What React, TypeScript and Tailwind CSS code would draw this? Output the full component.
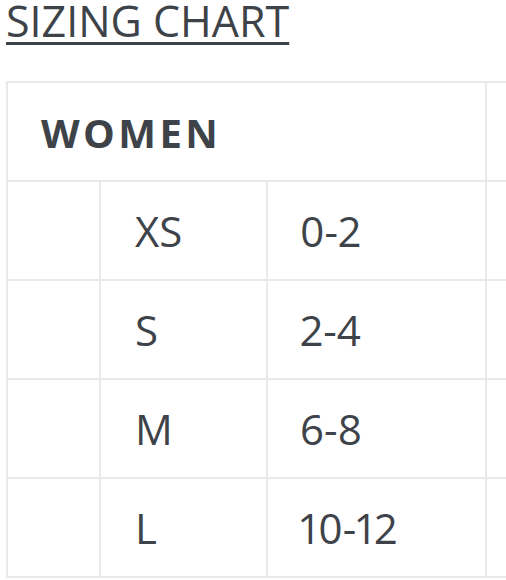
import React from "react";

const rows = [
  ["XS", "0-2"],
  ["S", "2-4"],
  ["M", "6-8"],
  ["L", "10-12"],
];

export default function App() {
  return (
    <div className="w-[506px] h-[580px] overflow-hidden bg-white text-[#3e4349] font-['Open_Sans',sans-serif]">
      <h1 className="pl-[6px] text-[43px] leading-[42px] font-normal underline decoration-[3px] underline-offset-[5px]">
        SIZING CHART
      </h1>
      <div className="mt-[39px] ml-[6px] w-[700px] border-l-2 border-t-2 border-[#e7e9ea]">
        <div className="flex h-[99px]">
          <div className="w-[479px] shrink-0 border-r-2 border-b-2 border-[#e7e9ea] flex items-center pl-[33px] pt-[2px] text-[40px] font-bold tracking-[0.085em]">
            WOMEN
          </div>
          <div className="w-[200px] shrink-0 border-r-2 border-b-2 border-[#e7e9ea]" />
        </div>
        {rows.map(([a, b]) => (
          <div key={a} className="flex h-[99px] text-[42px] proportional-nums">
            <div className="w-[93px] shrink-0 border-r-2 border-b-2 border-[#e7e9ea]" />
            <div className="w-[167px] shrink-0 border-r-2 border-b-2 border-[#e7e9ea] flex items-center pl-[34px]">
              {a}
            </div>
            <div className="w-[219px] shrink-0 border-r-2 border-b-2 border-[#e7e9ea] flex items-center pl-[32px]">
              {b}
            </div>
            <div className="w-[200px] shrink-0 border-r-2 border-b-2 border-[#e7e9ea]" />
          </div>
        ))}
      </div>
    </div>
  );
}
